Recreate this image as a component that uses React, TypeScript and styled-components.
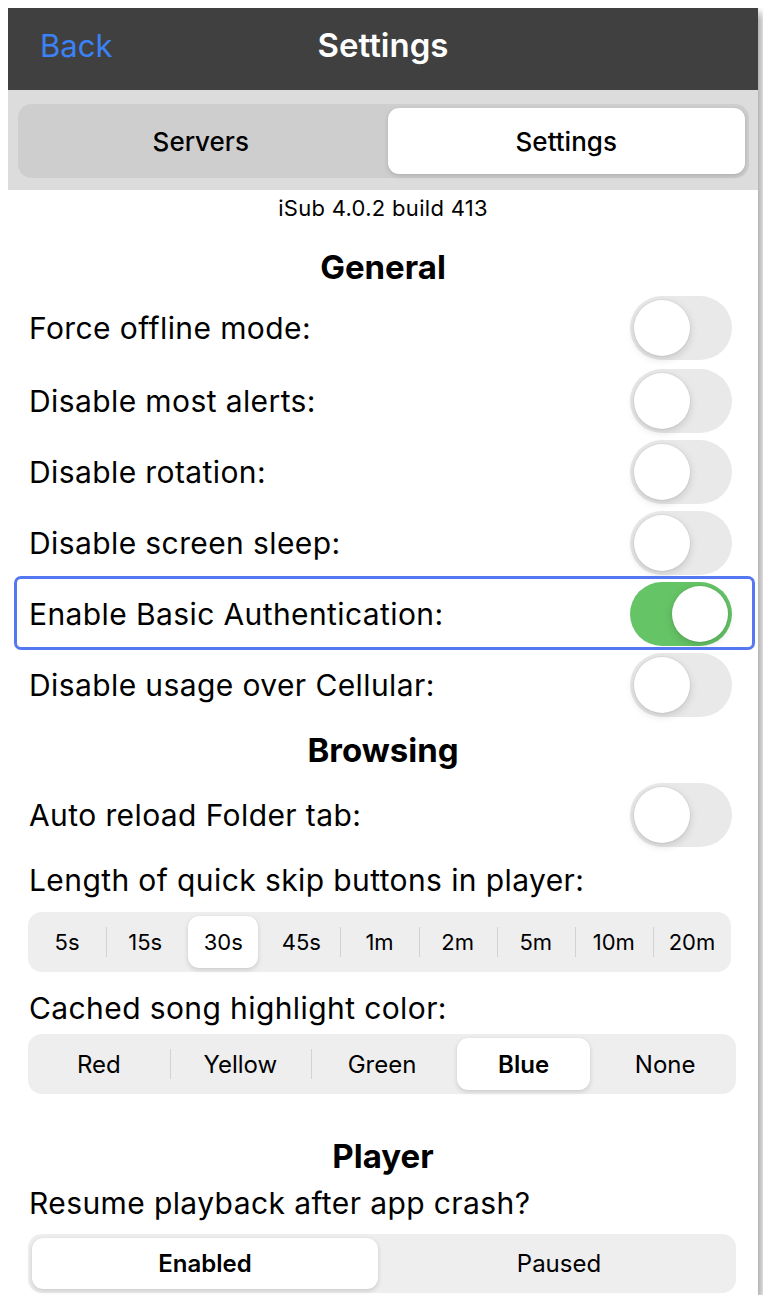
import React, { useState } from 'react';
import styled, { createGlobalStyle } from 'styled-components';

const GlobalStyle = createGlobalStyle`
  body {
    margin: 8px;
    background: #ffffff;
    font-family: Inter, "Noto Sans", sans-serif;
    color: #000000;
  }
`;

const Screen = styled.div`
  width: 750px;
  height: 1287px;
  background: #ffffff;
  overflow: hidden;
  box-shadow: 4px 5px 8px rgba(0, 0, 0, 0.35);
`;

const NavBar = styled.div`
  height: 82px;
  box-sizing: border-box;
  background: #404040;
  display: grid;
  grid-template-columns: 1fr auto 1fr;
  align-items: center;
  padding: 0 32px 8px;
`;

const BackButton = styled.span`
  color: #3b82f6;
  font-size: 31px;
  justify-self: start;
`;

const NavTitle = styled.span`
  color: #ffffff;
  font-size: 33px;
  font-weight: 600;
`;

const TabArea = styled.div`
  background: #dcdcdc;
  padding: 14px 9px 12px 10px;
`;

const SegmentTrack = styled.div<{ $bg: string; $height: number; $radius: number }>`
  display: flex;
  align-items: stretch;
  height: ${p => p.$height}px;
  background: ${p => p.$bg};
  border-radius: ${p => p.$radius}px;
`;

const SegmentCell = styled.div<{ $divider: boolean }>`
  flex: 1;
  position: relative;
  display: flex;
  align-items: stretch;
  padding: 4px;

  &::before {
    content: '';
    display: ${p => (p.$divider ? 'block' : 'none')};
    position: absolute;
    left: 0;
    top: 25%;
    bottom: 25%;
    width: 1px;
    background: #d2d2d4;
  }
`;

const SegmentThumb = styled.div<{ $selected: boolean; $size: number; $radius: number; $weight: number; $plain: number }>`
  flex: 1;
  display: flex;
  align-items: center;
  justify-content: center;
  border-radius: ${p => p.$radius}px;
  background: ${p => (p.$selected ? '#ffffff' : 'transparent')};
  box-shadow: ${p => (p.$selected ? '0 2px 5px rgba(0, 0, 0, 0.14), 0 0 1px rgba(0, 0, 0, 0.1)' : 'none')};
  font-size: ${p => p.$size}px;
  font-weight: ${p => (p.$selected ? p.$weight : p.$plain)};
  color: #000000;
`;

const Content = styled.div`
  display: flex;
  flex-direction: column;
`;

const Version = styled.div`
  height: 36px;
  display: flex;
  align-items: center;
  justify-content: center;
  font-size: 22px;
  letter-spacing: 0.3px;
`;

const SectionHeader = styled.div<{ $top: number; $bottom: number }>`
  padding: ${p => p.$top}px 0 ${p => p.$bottom}px;
  line-height: 36px;
  text-align: center;
  font-size: 33px;
  font-weight: 700;
`;

const Row = styled.div<{ $focused?: boolean; $after?: number }>`
  position: relative;
  height: 71px;
  margin-bottom: ${p => p.$after ?? 0}px;
  display: flex;
  align-items: center;
  justify-content: space-between;
  padding: 0 26px 0 21px;

  &::after {
    content: '';
    display: ${p => (p.$focused ? 'block' : 'none')};
    position: absolute;
    left: 6px;
    right: 3px;
    top: -2px;
    bottom: -1px;
    border: 3px solid #5677f2;
    border-radius: 7px;
    pointer-events: none;
  }
`;

const Label = styled.div<{ $top?: number; $bottom?: number }>`
  font-size: 30px;
  letter-spacing: 0.4px;
  line-height: 36px;
  padding: ${p => p.$top ?? 0}px 0 ${p => p.$bottom ?? 0}px 21px;
`;

const RowLabel = styled.span`
  font-size: 30px;
  letter-spacing: 0.4px;
`;

const SwitchTrack = styled.div<{ $on: boolean }>`
  width: 102px;
  height: 64px;
  border-radius: 32px;
  padding: 4px;
  box-sizing: border-box;
  background: ${p => (p.$on ? '#65c466' : '#e9e9ea')};
  display: flex;
  justify-content: ${p => (p.$on ? 'flex-end' : 'flex-start')};
  cursor: pointer;
`;

const SwitchKnob = styled.div`
  width: 56px;
  height: 56px;
  border-radius: 50%;
  background: #ffffff;
  box-shadow: 0 3px 8px rgba(0, 0, 0, 0.15), 0 0 0 1px rgba(0, 0, 0, 0.04);
`;

const SegmentWrap = styled.div<{ $right: number }>`
  padding: 0 ${p => p.$right}px 0 20px;
`;

function Switch(props: { on: boolean; onToggle: () => void }) {
  return (
    <SwitchTrack $on={props.on} onClick={props.onToggle}>
      <SwitchKnob />
    </SwitchTrack>
  );
}

interface SegmentedProps {
  items: string[]
  selected: number
  onSelect: (i: number) => void
  height: number
  bg: string
  size: number
  weight?: number
  plainWeight?: number
  radius?: number
  dividers?: boolean
}

function Segmented(props: SegmentedProps) {
  const radius = props.radius ?? 14;
  const weight = props.weight ?? 500;
  const plain = props.plainWeight ?? 400;
  return (
    <SegmentTrack $bg={props.bg} $height={props.height} $radius={radius}>
      {props.items.map((item, i) => {
        // no divider next to the selected thumb
        const divider = props.dividers !== false && i > 0 && i !== props.selected && i - 1 !== props.selected;
        return (
          <SegmentCell key={item} $divider={divider} onClick={() => props.onSelect(i)}>
            <SegmentThumb $selected={i === props.selected} $size={props.size} $radius={radius - 3} $weight={weight} $plain={plain}>
              {item}
            </SegmentThumb>
          </SegmentCell>
        );
      })}
    </SegmentTrack>
  );
}

const generalOptions = [
  'Force offline mode:',
  'Disable most alerts:',
  'Disable rotation:',
  'Disable screen sleep:',
  'Enable Basic Authentication:',
  'Disable usage over Cellular:',
];

const skipLengths = ['5s', '15s', '30s', '45s', '1m', '2m', '5m', '10m', '20m'];
const highlightColors = ['Red', 'Yellow', 'Green', 'Blue', 'None'];

export default function App() {
  const [tab, setTab] = useState(1);
  const [general, setGeneral] = useState([false, false, false, false, true, false]);
  const [autoReload, setAutoReload] = useState(false);
  const [skip, setSkip] = useState(2);
  const [color, setColor] = useState(3);
  const [resume, setResume] = useState(0);

  const toggleGeneral = (index: number) => {
    setGeneral(general.map((v, i) => (i === index ? !v : v)));
  };

  return (
    <>
      <GlobalStyle />
      <Screen>
        <NavBar>
          <BackButton>Back</BackButton>
          <NavTitle>Settings</NavTitle>
        </NavBar>
        <TabArea>
          <Segmented items={['Servers', 'Settings']} selected={tab} onSelect={setTab} height={74} bg="#cecece" size={26} plainWeight={500} dividers={false} />
        </TabArea>
        <Content>
          <Version>iSub 4.0.2 build 413</Version>

          <SectionHeader $top={23} $bottom={7}>General</SectionHeader>
          {generalOptions.map((label, i) => (
            <Row key={label} $focused={i === 4} $after={i === 0 ? 2 : 0}>
              <RowLabel>{label}</RowLabel>
              <Switch on={general[i]} onToggle={() => toggleGeneral(i)} />
            </Row>
          ))}

          <SectionHeader $top={12} $bottom={11}>Browsing</SectionHeader>
          <Row>
            <RowLabel>Auto reload Folder tab:</RowLabel>
            <Switch on={autoReload} onToggle={() => setAutoReload(!autoReload)} />
          </Row>
          <Label $top={12} $bottom={14}>Length of quick skip buttons in player:</Label>
          <SegmentWrap $right={27}>
            <Segmented items={skipLengths} selected={skip} onSelect={setSkip} height={60} bg="#eeeeef" size={22} weight={400} />
          </SegmentWrap>
          <Label $top={18} $bottom={8}>Cached song highlight color:</Label>
          <SegmentWrap $right={22}>
            <Segmented items={highlightColors} selected={color} onSelect={setColor} height={60} bg="#eeeeef" size={24} weight={600} />
          </SegmentWrap>

          <SectionHeader $top={44} $bottom={0}>Player</SectionHeader>
          <Label $top={11} $bottom={13}>Resume playback after app crash?</Label>
          <SegmentWrap $right={22}>
            <Segmented items={['Enabled', 'Paused']} selected={resume} onSelect={setResume} height={59} bg="#eeeeef" size={24} weight={600} dividers={false} />
          </SegmentWrap>
        </Content>
      </Screen>
    </>
  );
}
